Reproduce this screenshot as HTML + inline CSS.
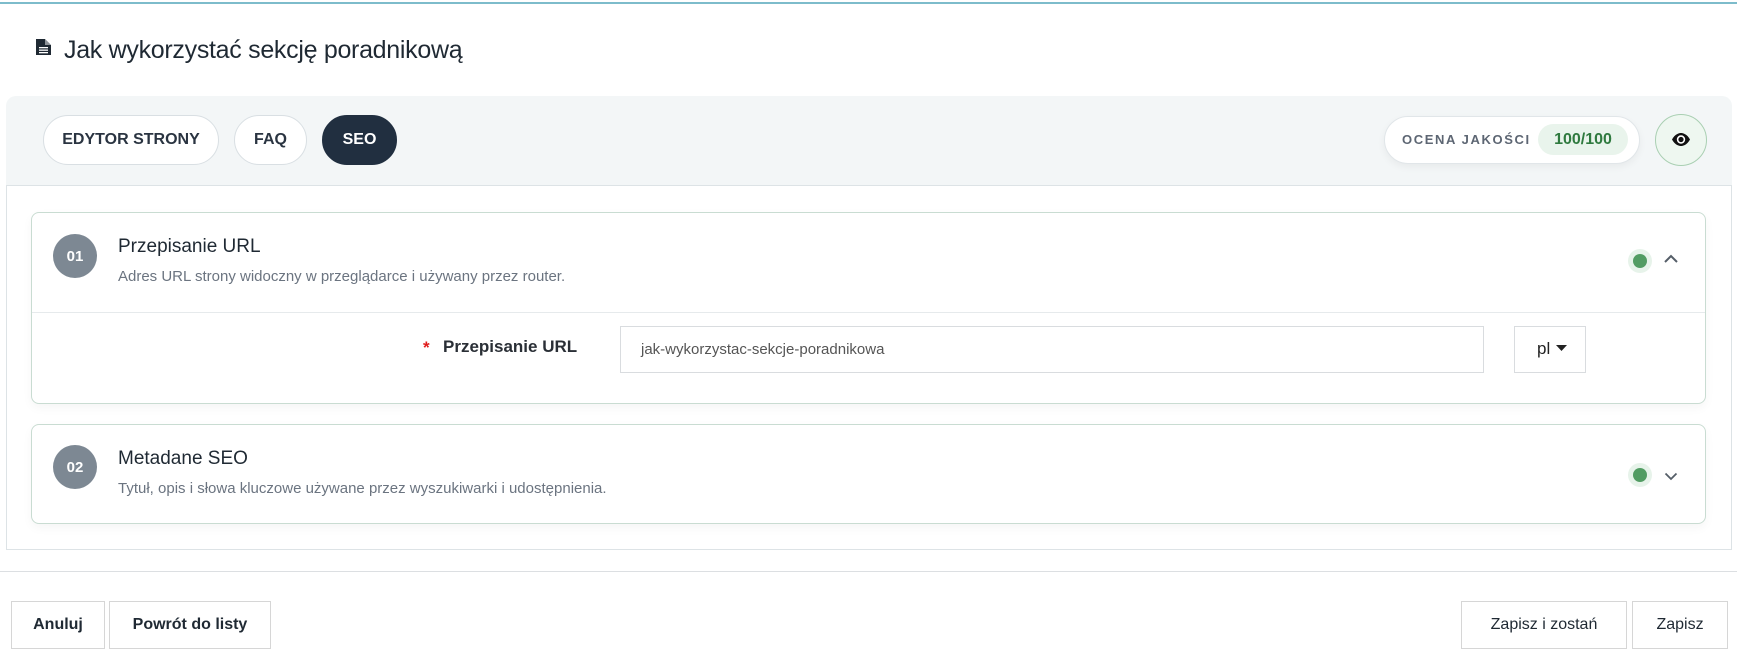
<!DOCTYPE html>
<html><head><meta charset="utf-8"><style>
*{box-sizing:border-box;margin:0;padding:0}
body{width:1737px;height:659px;background:#fff;font-family:"Liberation Sans",sans-serif;color:#1f2933;position:relative;overflow:hidden}
.a{position:absolute}
.topline{left:0;top:2px;width:1737px;height:2px;background:#7dbccb}
.title{left:64px;top:34px;font-size:25px;line-height:32px;color:#1f2933;letter-spacing:-0.3px}
.toolbar{left:6px;top:96px;width:1726px;height:90px;background:#f3f6f7;border-radius:10px 10px 0 0;border-bottom:1px solid #dde3e6}
.tab{top:115px;height:50px;border-radius:25px;border:1px solid #d9dfe3;background:#fff;font-size:16px;font-weight:bold;color:#2a3441;display:flex;align-items:center;justify-content:center}
.content{left:6px;top:185px;width:1726px;height:365px;border:1px solid #dde3e6;border-top:none}
.card{left:31px;width:1675px;border:1px solid #c9dcd2;border-radius:8px;background:#fff;box-shadow:0 4px 10px rgba(0,0,0,0.04)}
.num{width:44px;height:44px;border-radius:50%;background:#7d8893;color:#fff;font-weight:bold;font-size:15px;display:flex;align-items:center;justify-content:center}
.ct{font-size:19px;color:#1f2933}
.cs{font-size:15px;color:#6b7480}
.dot{width:24px;height:24px;border-radius:50%;background:#e7f3ea}
.dot:after{content:"";position:absolute;left:5px;top:5px;width:14px;height:14px;border-radius:50%;background:#529c63}
.btn{top:601px;height:48px;border:1px solid #d6d6d6;background:#fff;font-size:16px;font-weight:bold;color:#1f2933;display:flex;align-items:center;justify-content:center}
</style></head><body>
<div class="a topline"></div>
<svg class="a" style="left:36px;top:39px" width="15" height="16" viewBox="0 0 15 16"><path d="M0 0H9L15 6V16H0Z" fill="#1f2933"/><path d="M9 0V6H15" fill="#fff" opacity=".5"/><rect x="3" y="8" width="9" height="1.3" fill="#fff"/><rect x="3" y="10.5" width="9" height="1.3" fill="#fff"/><rect x="3" y="13" width="9" height="1.3" fill="#fff"/></svg>
<div class="a title">Jak wykorzystać sekcję poradnikową</div>
<div class="a toolbar"></div>
<div class="a tab" style="left:43px;width:176px">EDYTOR STRONY</div>
<div class="a tab" style="left:234px;width:73px">FAQ</div>
<div class="a tab" style="left:322px;width:75px;background:#212f40;border-color:#212f40;color:#fff">SEO</div>
<div class="a" style="left:1384px;top:116px;width:256px;height:48px;border-radius:24px;background:#fff;border:1px solid #e1e6e9;box-shadow:0 3px 8px rgba(0,0,0,0.05)"></div>
<div class="a" style="left:1402px;top:131px;font-size:13px;font-weight:bold;letter-spacing:1.6px;color:#5d6673;line-height:18px">OCENA JAKOŚCI</div>
<div class="a" style="left:1538px;top:124px;width:90px;height:31px;border-radius:16px;background:#e9f4ec;color:#2f7a3f;font-weight:bold;font-size:16px;display:flex;align-items:center;justify-content:center">100/100</div>
<div class="a" style="left:1655px;top:114px;width:52px;height:52px;border-radius:50%;background:#eef7f0;border:1px solid #a9cfb2"></div>
<svg class="a" style="left:1671px;top:132px" width="20" height="15" viewBox="0 0 20 15"><path d="M1 7.5C4 2 8 1 10 1s6 1 9 6.5C16 13 12 14 10 14S4 13 1 7.5Z" fill="#111"/><circle cx="10" cy="7.5" r="4.2" fill="#fff"/><circle cx="10" cy="7.5" r="2.6" fill="#111"/></svg>
<div class="a content"></div>
<div class="a card" style="top:212px;height:192px"></div>
<div class="a num" style="left:53px;top:234px">01</div>
<div class="a ct" style="left:118px;top:236px">Przepisanie URL</div>
<div class="a cs" style="left:118px;top:268px">Adres URL strony widoczny w przeglądarce i używany przez router.</div>
<div class="a dot" style="left:1628px;top:249px"></div>
<svg class="a" style="left:1663px;top:254px" width="16" height="10" viewBox="0 0 16 10"><path d="M2 8L8 2L14 8" fill="none" stroke="#555e68" stroke-width="2"/></svg>
<div class="a" style="left:32px;top:312px;width:1673px;height:1px;background:#e6eaec"></div>
<div class="a" style="left:423px;top:338px;font-size:17px;font-weight:bold;color:#e01b1b">*</div>
<div class="a" style="left:443px;top:337px;font-size:17px;font-weight:bold;color:#2a2f36">Przepisanie URL</div>
<div class="a" style="left:620px;top:326px;width:864px;height:47px;border:1px solid #d9dcdf;background:#fff"></div>
<div class="a" style="left:641px;top:341px;font-size:15px;color:#555">jak-wykorzystac-sekcje-poradnikowa</div>
<div class="a" style="left:1514px;top:326px;width:72px;height:47px;border:1px solid #d9dcdf;background:#fff"></div>
<div class="a" style="left:1537px;top:339px;font-size:17px;color:#222">pl</div>
<svg class="a" style="left:1556px;top:345px" width="11" height="7" viewBox="0 0 11 7"><path d="M0 0H11L5.5 6Z" fill="#222"/></svg>
<div class="a card" style="top:424px;height:100px"></div>
<div class="a num" style="left:53px;top:445px">02</div>
<div class="a ct" style="left:118px;top:448px">Metadane SEO</div>
<div class="a cs" style="left:118px;top:480px">Tytuł, opis i słowa kluczowe używane przez wyszukiwarki i udostępnienia.</div>
<div class="a dot" style="left:1628px;top:463px"></div>
<svg class="a" style="left:1664px;top:472px" width="14" height="9" viewBox="0 0 14 9"><path d="M1.5 1.5L7 7L12.5 1.5" fill="none" stroke="#555e68" stroke-width="1.8"/></svg>
<div class="a" style="left:0;top:571px;width:1737px;height:1px;background:#dcdfe2"></div>
<div class="a btn" style="left:11px;width:94px">Anuluj</div>
<div class="a btn" style="left:109px;width:162px">Powrót do listy</div>
<div class="a btn" style="left:1461px;width:166px;font-weight:normal">Zapisz i zostań</div>
<div class="a btn" style="left:1632px;width:96px;font-weight:normal">Zapisz</div>
</body></html>
